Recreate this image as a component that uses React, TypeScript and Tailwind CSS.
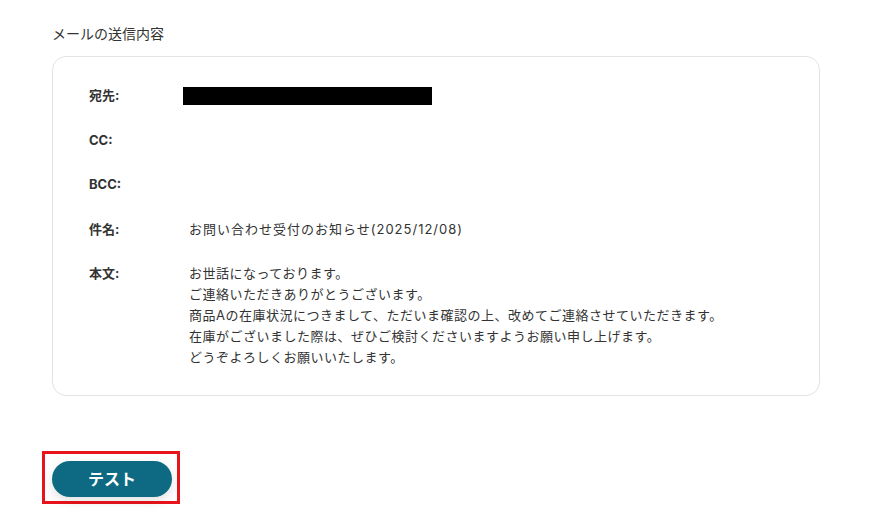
import React from 'react';

const rows = [
  { label: '宛先:', value: 'redacted' },
  { label: 'CC:', value: '' },
  { label: 'BCC:', value: '' },
  { label: '件名:', value: 'お問い合わせ受付のお知らせ(2025/12/08)' },
];

const body = [
  'お世話になっております。',
  'ご連絡いただきありがとうございます。',
  '商品Aの在庫状況につきまして、ただいま確認の上、改めてご連絡させていただきます。',
  '在庫がございました際は、ぜひご検討くださいますようお願い申し上げます。',
  'どうぞよろしくお願いいたします。',
];

export default function App() {
  return (
    <div
      className="w-[875px] h-[530px] bg-white text-[#333] pl-[52px] pr-[55px] pt-6"
      style={{ fontFamily: 'Inter, "Noto Sans CJK JP", sans-serif' }}
    >
      <h2 className="text-sm leading-5 mb-3 text-[#333]">メールの送信内容</h2>

      <div className="border border-[#e3e3e3] rounded-[14px] pt-7 pb-[27px] pl-[36px] pr-8">
        <div className="flex flex-col gap-[23.5px] text-[13px] leading-[21px]">
          {rows.map((row) => (
            <div key={row.label} className="flex">
              <div className="w-[100px] shrink-0 font-bold text-[#333]">{row.label}</div>
              {row.value === 'redacted' ? (
                <div className="flex items-center -ml-[6px]">
                  <div className="w-[249px] h-[18px] bg-black" />
                </div>
              ) : (
                <div className="tracking-[1px]">{row.value}</div>
              )}
            </div>
          ))}
          <div className="flex">
            <div className="w-[100px] shrink-0 font-bold text-[#333]">本文:</div>
            <div className="flex flex-col tracking-[0.5px]">
              {body.map((line) => (
                <p key={line}>{line}</p>
              ))}
            </div>
          </div>
        </div>
      </div>

      <div className="mt-[55px] -ml-[10px] inline-block border-[3px] border-[#e8141c] pl-[7px] pr-[5px] pt-[7px] pb-[4px]">
        <button className="w-[120px] h-9 rounded-full bg-[#0d6a82] text-white font-bold text-base shadow-[0_4px_12px_rgba(0,0,0,0.12)]">
          テスト
        </button>
      </div>
    </div>
  );
}
